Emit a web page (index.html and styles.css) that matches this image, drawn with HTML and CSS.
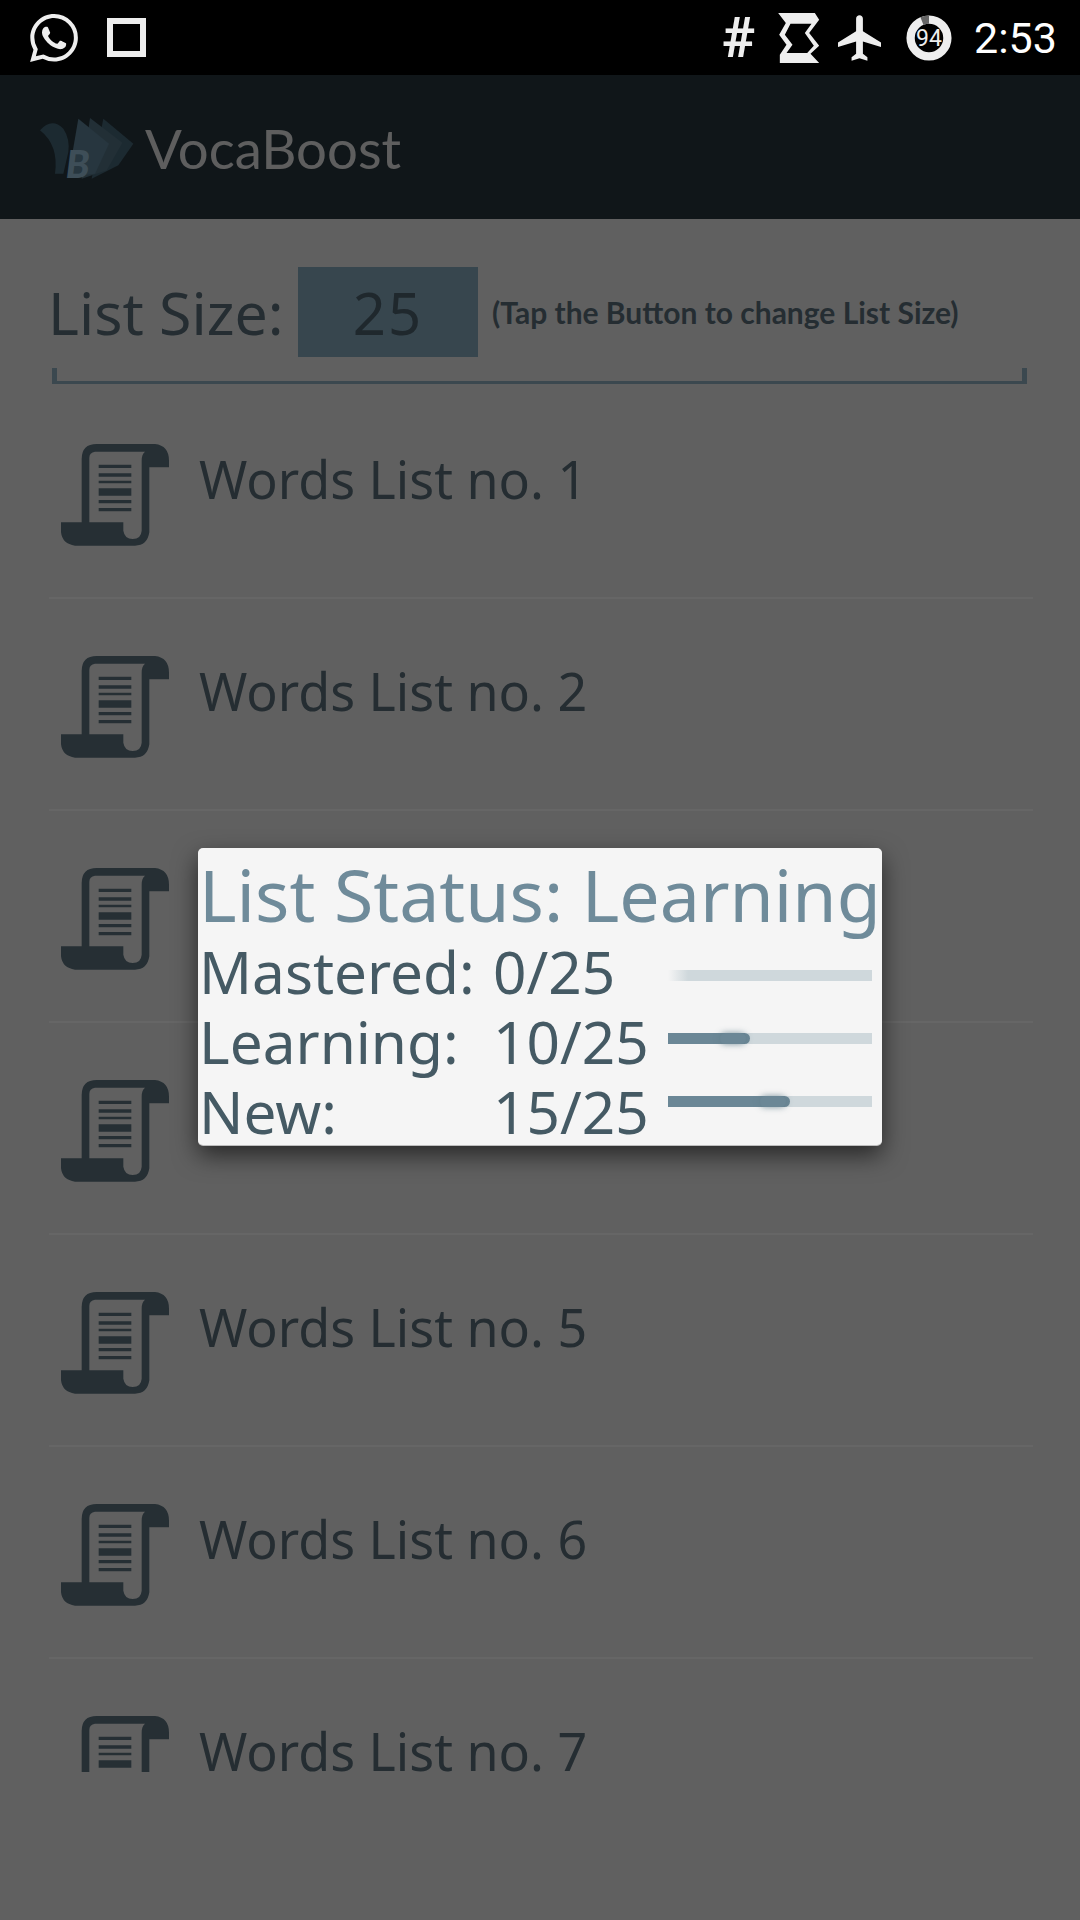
FILE: index.html
```html
<!DOCTYPE html>
<html lang="en">
<head>
    <meta charset="UTF-8">
    <meta name="viewport" content="width=device-width, initial-scale=1.0">
    <title>VocaBoost</title>
    <link rel="stylesheet" href="styles.css">
</head>
<body>
    <svg class="defs" width="0" height="0">
        <symbol id="scroll" viewBox="90 578 330 310">
            <path fill-rule="evenodd" d="M155 815V625Q155 580 200 580H375Q417 585 417 630V650H358V845Q352 885 315 885H135Q97 880 93 845V815ZM178 815H280V840Q284 865 308 865Q333 865 335 840V630Q335 610 345 603H195Q178 605 178 622Z"/>
            <path d="M206 642h98v10h-98zM206 668h98v10h-98zM206 690h98v8h-98zM206 713h98v22h-98zM206 748h98v10h-98zM206 772h98v10h-98z"/>
        </symbol>
    </svg>

    <div class="status-bar">
        <svg class="ic-whatsapp" viewBox="0 0 24 24"><path d="M17.472 14.382c-.297-.149-1.758-.867-2.03-.967-.273-.099-.471-.148-.67.15-.197.297-.767.966-.94 1.164-.173.199-.347.223-.644.075-.297-.15-1.255-.463-2.39-1.475-.883-.788-1.48-1.761-1.653-2.059-.173-.297-.018-.458.13-.606.134-.133.298-.347.446-.52.149-.174.198-.298.298-.497.099-.198.05-.371-.025-.52-.075-.149-.669-1.612-.916-2.207-.242-.579-.487-.5-.669-.51-.173-.008-.371-.01-.57-.01-.198 0-.52.074-.792.372-.272.297-1.04 1.016-1.04 2.479 0 1.462 1.065 2.875 1.213 3.074.149.198 2.096 3.2 5.077 4.487.709.306 1.262.489 1.694.625.712.227 1.36.195 1.871.118.571-.085 1.758-.719 2.006-1.413.248-.694.248-1.289.173-1.413-.074-.124-.272-.198-.57-.347m-5.421 7.403h-.004a9.87 9.87 0 01-5.031-1.378l-.361-.214-3.741.982.998-3.648-.235-.374a9.86 9.86 0 01-1.51-5.26c.001-5.45 4.436-9.884 9.888-9.884 2.64 0 5.122 1.03 6.988 2.898a9.825 9.825 0 012.893 6.994c-.003 5.45-4.437 9.884-9.885 9.884m8.413-18.297A11.815 11.815 0 0012.05 0C5.495 0 .16 5.335.157 11.892c0 2.096.547 4.142 1.588 5.945L.057 24l6.305-1.654a11.882 11.882 0 005.683 1.448h.005c6.554 0 11.89-5.335 11.893-11.893a11.821 11.821 0 00-3.48-8.413z"/></svg>
        <div class="ic-square"></div>
        <div class="status-right">
            <span class="ic-hash">#</span>
            <svg class="ic-sync" viewBox="25 20 125 150"><path fill-rule="evenodd" d="M25 20H135L148 40L118 80L148 118L122 142L148 170H30V145L50 115L28 85L48 50ZM62 52L45 85L68 115L50 140H112L132 118L105 80L125 52Z"/></svg>
            <svg class="ic-plane" viewBox="2 2 19 20"><path d="M21 16v-2l-8-5V3.5c0-.83-.67-1.5-1.5-1.5S10 2.67 10 3.5V9l-8 5v2l8-2.5V19l-2 1.5V22l3.5-1 3.5 1v-1.5L13 19v-5.5l8 2.5z"/></svg>
            <svg class="ic-battery" viewBox="0 0 46 46">
                <circle cx="23" cy="23" r="18.4" fill="none" stroke="#eee" stroke-width="8.3"/>
                <path d="M23 .5V8.8A14.2 14.2 0 0 0 17.5 9.9L14.4 2.2A22.5 22.5 0 0 1 23 .5Z" fill="#666"/>
                <text x="23" y="31" text-anchor="middle">94</text>
            </svg>
            <span class="clock">2:53</span>
        </div>
    </div>

    <div class="screen">
        <header class="app-bar">
            <svg class="logo" viewBox="15 25 285 195">
                <path d="M15 65Q50 25 85 60Q105 90 100 130L85 195H60Q72 110 15 65Z" fill="#48697a"/>
                <path d="M205 30L295 105L250 170L170 210Z" fill="#48697a"/>
                <path d="M165 28L262 102L215 185L140 210Z" fill="#557688"/>
                <path d="M130 30L222 105L180 195L100 205Z" fill="#61879d"/>
                <text x="92" y="208" class="logo-b">B</text>
            </svg>
            <span class="app-title">VocaBoost</span>
        </header>

        <div class="size-row">
            <span class="size-label">List Size:</span>
            <button class="size-btn">25</button>
            <span class="size-hint">(Tap the Button to change List Size)</span>
        </div>
        <div class="bracket"></div>

        <div class="word-lists">
            <div class="list-row"><svg class="scroll"><use href="#scroll"/></svg><span>Words List no. 1</span></div>
            <div class="list-row"><svg class="scroll"><use href="#scroll"/></svg><span>Words List no. 2</span></div>
            <div class="list-row"><svg class="scroll"><use href="#scroll"/></svg><span>Words List no. 3</span></div>
            <div class="list-row"><svg class="scroll"><use href="#scroll"/></svg><span>Words List no. 4</span></div>
            <div class="list-row"><svg class="scroll"><use href="#scroll"/></svg><span>Words List no. 5</span></div>
            <div class="list-row"><svg class="scroll"><use href="#scroll"/></svg><span>Words List no. 6</span></div>
            <div class="list-row"><svg class="scroll"><use href="#scroll"/></svg><span>Words List no. 7</span></div>
        </div>

        <div class="scrim"></div>

        <div class="status-dialog">
            <h2>List Status: Learning</h2>
            <div class="stat-body">
                <div class="stat-text">
                    <div class="stat-row"><span class="stat-name">Mastered:</span><span>0/25</span></div>
                    <div class="stat-row"><span class="stat-name">Learning:</span><span>10/25</span></div>
                    <div class="stat-row"><span class="stat-name">New:</span><span>15/25</span></div>
                </div>
                <div class="stat-bars">
                    <div class="bar"><div class="bar-fill empty"></div></div>
                    <div class="bar"><div class="bar-fill" style="width: 40%"></div></div>
                    <div class="bar"><div class="bar-fill" style="width: 60%"></div></div>
                </div>
            </div>
        </div>
    </div>
</body>
</html>
```

FILE: styles.css
```css
* {
    box-sizing: border-box;
}
html, body {
    margin: 0;
    height: 100%;
}
body {
    width: 1080px;
    height: 1920px;
    overflow: hidden;
    background: #000;
    font-family: "Noto Sans", sans-serif;
}
.defs {
    position: absolute;
}

/* status bar */
.status-bar {
    height: 75px;
    background: #000;
    display: flex;
    align-items: center;
    padding: 0 25px 0 30px;
    color: #eee;
    fill: #eee;
}
.ic-whatsapp {
    width: 48px;
    height: 48px;
    margin-top: 1px;
}
.ic-square {
    width: 39px;
    height: 39px;
    margin-left: 29px;
    border: 6px solid #eee;
}
.status-right {
    margin-left: auto;
    display: flex;
    align-items: center;
}
.ic-hash {
    width: 32px;
    font: bold 56px "Roboto", sans-serif;
    text-align: center;
}
.ic-sync {
    width: 42px;
    height: 50px;
    margin-left: 24px;
}
.ic-plane {
    width: 43px;
    height: 46px;
    margin-left: 18px;
}
.ic-battery {
    width: 46px;
    height: 46px;
    margin-left: 25px;
}
.ic-battery text {
    font: 23px "Roboto", sans-serif;
    fill: #eee;
}
.clock {
    width: 81px;
    margin-left: 22px;
    font: 43px "Roboto", sans-serif;
    white-space: nowrap;
    color: #fff;
}

/* screen under the scrim */
.screen {
    position: relative;
    height: 1845px;
    background: #f0f0f0;
}
.scrim {
    position: absolute;
    top: 0;
    left: 0;
    right: 0;
    bottom: 0;
    background: rgba(0, 0, 0, 0.6);
}
.app-bar {
    height: 144px;
    background: #283840;
    display: flex;
    align-items: center;
    padding-left: 40px;
}
.logo {
    width: 95px;
    height: 65px;
    margin-top: 4px;
    overflow: visible;
}
.logo-b {
    font: italic 900 116px "Lato", sans-serif;
    fill: #9cc4dc;
}
.app-title {
    margin: 2px 0 0 10px;
    font: 54.5px "Lato", sans-serif;
    color: #ececec;
}
.size-row {
    height: 154px;
    padding: 48px 0 0 48px;
    display: flex;
    align-items: flex-start;
    color: #5c727e;
}
.size-label {
    width: 250px;
    font-size: 59px;
    line-height: 90px;
}
.size-btn {
    width: 180px;
    height: 90px;
    padding: 0;
    border: none;
    background: #8ab0c4;
    color: #4f6471;
    font: 58px "Noto Sans", sans-serif;
    letter-spacing: 2px;
}
.size-hint {
    margin-left: 14px;
    font: bold 30px/90px "Lato", sans-serif;
}
.bracket {
    height: 16px;
    margin: -5px 53px 0 52px;
    border: solid #95b5c6;
    border-width: 0 5px 3px 5px;
}
.word-lists {
    height: 1385px;
    margin: 3px 47px 0 49px;
    overflow: hidden;
}
.list-row {
    height: 212px;
    display: flex;
    align-items: center;
    padding: 6px 0 0 11px;
    border-bottom: 2px solid #fff;
    font-size: 52px;
    color: #5c727e;
}
.list-row span {
    margin-bottom: 33px;
}
.scroll {
    width: 110px;
    height: 104px;
    margin-right: 29px;
    fill: #5f7683;
}

/* dialog over the scrim */
.status-dialog {
    position: absolute;
    top: 773px;
    left: 198px;
    width: 684px;
    height: 297px;
    padding: 0 2px 0 1px;
    background: #f5f5f5;
    border-radius: 5px;
    box-shadow: 0 1px 0 #bdbdbd, 0 10px 24px rgba(0, 0, 0, 0.6);
}
.status-dialog h2 {
    margin: 0;
    height: 88px;
    padding-top: 2px;
    font-size: 71.7px;
    font-weight: 400;
    line-height: 88px;
    white-space: nowrap;
    color: #6f8b9a;
}
.stat-body {
    display: flex;
}
.stat-text {
    width: 469px;
    font-size: 58.5px;
    color: #455a64;
}
.stat-row {
    height: 70px;
    line-height: 70px;
    display: flex;
}
.stat-name {
    width: 294px;
}
.stat-bars {
    width: 204px;
    padding-top: 34px;
    display: flex;
    flex-direction: column;
    gap: 52px;
}
.bar {
    height: 11px;
    background: #cfd8dc;
}
.bar-fill {
    position: relative;
    height: 100%;
    background: #6b8796;
    border-radius: 0 6px 6px 0;
}
.bar-fill::after {
    content: "";
    position: absolute;
    top: 0;
    right: 4px;
    width: 26px;
    height: 100%;
    border-radius: 6px;
    box-shadow: 0 0 6px rgba(96, 125, 139, 0.8);
}
.bar-fill.empty {
    width: 20px;
    background: linear-gradient(90deg, #f5f5f5, #cfd8dc);
    border-radius: 0;
}
.bar-fill.empty::after {
    display: none;
}
```
